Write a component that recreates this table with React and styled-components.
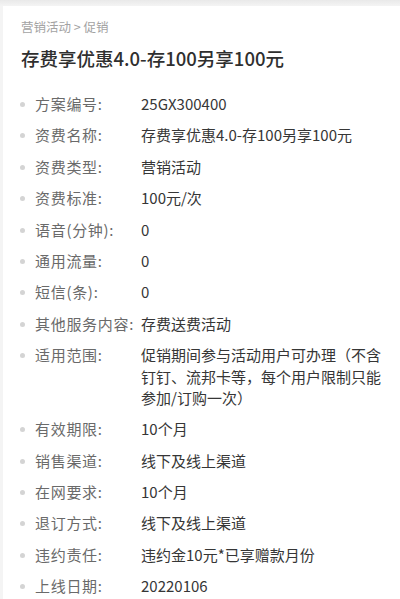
import React from "react";
import styled, { createGlobalStyle } from "styled-components";

const Global = createGlobalStyle`
  html, body { margin: 0; padding: 0; }
  body {
    background: linear-gradient(#e9e9e9, #f4f4f4 6px, #f4f4f4);
    font-family: "Noto Sans CJK SC", "Noto Sans", sans-serif;
    width: 400px;
    height: 599px;
    overflow: hidden;
  }
`;

const Card = styled.div`
  margin: 6px 0 0 3px;
  background: #fff;
  height: 593px;
  padding: 12px 0 0 18px;
  box-sizing: border-box;
`;

const Crumb = styled.div`
  font-size: 12.5px;
  line-height: 18px;
  color: #a3a3a3;
`;

const Title = styled.h1`
  margin: 9px 0 0;
  font-size: 18.5px;
  line-height: 26px;
  font-weight: 500;
  color: #2f2f2f;
`;

const List = styled.ul`
  list-style: none;
  margin: 22px 0 0;
  padding: 0;
  display: flex;
  flex-direction: column;
  gap: 10px;
`;

const Row = styled.li`
  display: grid;
  grid-template-columns: 14px 106px 1fr;
  align-items: start;
  font-size: 15px;
  line-height: 21.4px;
  height: ${(p) => p.$lines * 21.4}px;
`;

const Dot = styled.span`
  width: 5px;
  height: 5px;
  border-radius: 50%;
  background: #d4d4d4;
  margin-top: 9px;
  margin-left: -1px;
`;

const Label = styled.span`
  color: #6a6a6a;
  letter-spacing: 0.7px;
  white-space: nowrap;
`;

const Value = styled.span`
  color: #363636;
  padding-right: 14px;
`;

const rows = [
  ["方案编号:", "25GX300400"],
  ["资费名称:", "存费享优惠4.0-存100另享100元"],
  ["资费类型:", "营销活动"],
  ["资费标准:", "100元/次"],
  ["语音(分钟):", "0"],
  ["通用流量:", "0"],
  ["短信(条):", "0"],
  ["其他服务内容:", "存费送费活动"],
  ["适用范围:", "促销期间参与活动用户可办理（不含钉钉、流邦卡等，每个用户限制只能参加/订购一次）", 3],
  ["有效期限:", "10个月"],
  ["销售渠道:", "线下及线上渠道"],
  ["在网要求:", "10个月"],
  ["退订方式:", "线下及线上渠道"],
  ["违约责任:", "违约金10元*已享赠款月份"],
  ["上线日期:", "20220106"],
];

export default function App() {
  return (
    <>
      <Global />
      <Card>
        <Crumb>营销活动 &gt; 促销</Crumb>
        <Title>存费享优惠4.0-存100另享100元</Title>
        <List>
          {rows.map(([k, v, n = 1]) => (
            <Row key={k} $lines={n}>
              <Dot />
              <Label>{k}</Label>
              <Value>{v}</Value>
            </Row>
          ))}
        </List>
      </Card>
    </>
  );
}
